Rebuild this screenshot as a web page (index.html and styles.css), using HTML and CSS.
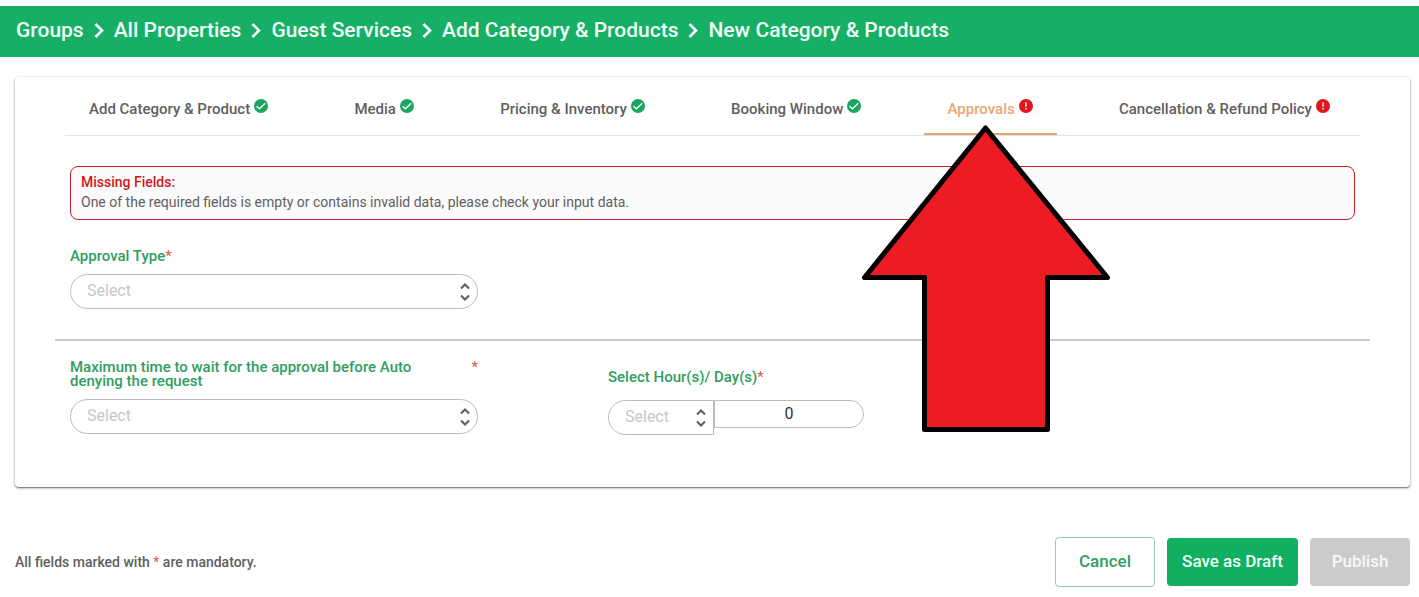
FILE: index.html
```
<!DOCTYPE html>
<html lang="en">
<head>
<meta charset="utf-8">
<meta name="viewport" content="width=device-width, initial-scale=1">
<title>New Category &amp; Products</title>
<link rel="stylesheet" href="styles.css">
</head>
<body>
<svg class="sprite" aria-hidden="true">
  <symbol id="ok" viewBox="0 0 14 14"><circle cx="7" cy="7" r="7" fill="#1aa563"/><path d="M2.600 7.200l2.800 2.600 5.800-5.600" fill="none" stroke="#fff" stroke-width="1.300"/></symbol>
  <symbol id="warn" viewBox="0 0 14 14"><circle cx="7" cy="7" r="7" fill="#e0161c"/><path d="M7 3.2v4.6M7 9v1.6" fill="none" stroke="#fff" stroke-width="1.4"/></symbol>
  <symbol id="next" viewBox="0 0 10 16"><path d="M1.500 2l6.500 6.500-6.500 6.500" fill="none" stroke="#fff" stroke-width="2.600"/></symbol>
  <symbol id="updown" viewBox="0 0 10 20"><path d="M1 6.5l4-4 4 4M1 13.5l4 4 4-4" fill="none" stroke="#5c5c5c" stroke-width="2"/></symbol>
</svg>

<nav class="breadcrumb" aria-label="Breadcrumb">
  <a href="#">Groups</a>
  <svg class="crumb-sep"><use href="#next"/></svg>
  <a href="#">All Properties</a>
  <svg class="crumb-sep"><use href="#next"/></svg>
  <a href="#">Guest Services</a>
  <svg class="crumb-sep"><use href="#next"/></svg>
  <a href="#">Add Category &amp; Products</a>
  <svg class="crumb-sep"><use href="#next"/></svg>
  <a href="#" aria-current="page">New Category &amp; Products</a>
</nav>

<main class="card">
  <ul class="tabs">
    <li class="tab"><button class="tab-button" type="button">Add Category &amp; Product<svg class="status"><use href="#ok"/></svg></button></li>
    <li class="tab"><button class="tab-button" type="button">Media<svg class="status"><use href="#ok"/></svg></button></li>
    <li class="tab"><button class="tab-button" type="button">Pricing &amp; Inventory<svg class="status"><use href="#ok"/></svg></button></li>
    <li class="tab"><button class="tab-button" type="button">Booking Window<svg class="status"><use href="#ok"/></svg></button></li>
    <li class="tab tab-active">
      <button class="tab-button" type="button">Approvals<svg class="status"><use href="#warn"/></svg></button>
      <svg class="pointer" viewBox="0 0 250 312" aria-hidden="true"><path d="M124.500 5L3.500 154.500H63.500V306.500H186.500V154.500H246.500Z" fill="#ed1c24" stroke="#000" stroke-width="5" stroke-linejoin="round"/></svg>
    </li>
    <li class="tab"><button class="tab-button" type="button">Cancellation &amp; Refund Policy<svg class="status"><use href="#warn"/></svg></button></li>
  </ul>

  <div class="alert" role="alert">
    <p class="alert-title">Missing Fields:</p>
    <p>One of the required fields is empty or contains invalid data, please check your input data.</p>
  </div>

  <form class="form" id="approvals">
    <div class="row row-first">
      <div class="field">
        <label class="label" for="type"><span>Approval Type<span class="required">*</span></span></label>
        <div class="select">
          <select class="control" id="type"><option>Select</option></select>
          <svg class="select-icon"><use href="#updown"/></svg>
        </div>
      </div>
    </div>
    <hr class="divider">
    <div class="row">
      <div class="field">
        <label class="label label-split" for="wait"><span class="label-text">Maximum time to wait for the approval before Auto denying the request</span><span class="required">*</span></label>
        <div class="select">
          <select class="control" id="wait"><option>Select</option></select>
          <svg class="select-icon"><use href="#updown"/></svg>
        </div>
      </div>
      <div class="field field-period">
        <label class="label" for="unit"><span>Select Hour(s)/ Day(s)<span class="required">*</span></span></label>
        <div class="period">
          <div class="select select-unit">
            <select class="control" id="unit"><option>Select</option></select>
            <svg class="select-icon"><use href="#updown"/></svg>
          </div>
          <input class="amount" type="text" inputmode="numeric" value="0" aria-label="Number of hours or days">
        </div>
      </div>
    </div>
  </form>
</main>

<footer class="footer">
  <p class="note">All fields marked with <span class="required">*</span> are mandatory.</p>
  <div class="actions">
    <button class="button button-outline" type="button">Cancel</button>
    <button class="button button-primary" type="button">Save as Draft</button>
    <button class="button button-disabled" type="button" disabled>Publish</button>
  </div>
</footer>
</body>
</html>
```
FILE: styles.css
```
* {
  box-sizing: border-box;
}

body {
  margin: 0;
  padding-top: 6px;
  background: #fff;
  color: #606060;
  font-family: Roboto, "Liberation Sans", sans-serif;
  font-size: 14px;
}

p, ul {
  margin: 0;
  padding: 0;
}

button, select, input {
  font-family: inherit;
}

.sprite {
  display: none;
}

.breadcrumb {
  display: flex;
  align-items: center;
  gap: 10px;
  min-height: 51px;
  padding: 0 16px 3px;
  background: #16af65;
  font-size: 21px;
  font-weight: 500;
}

.breadcrumb a {
  color: #f0fff6;
  text-decoration: none;
}

.crumb-sep {
  width: 10px;
  height: 16px;
}

.card {
  margin: 20px 9px 0 15px;
  padding: 0 40px 52px;
  border-radius: 4px;
  box-shadow: 0 1px 3px rgba(0, 0, 0, 0.4), 0 1px 1px rgba(0, 0, 0, 0.3);
}

.tabs {
  display: flex;
  justify-content: space-between;
  margin: 0 10px;
  padding-right: 6px;
  border-bottom: 1px solid #e4e4e4;
  list-style: none;
}

.tab {
  position: relative;
}

.tab-button {
  display: flex;
  align-items: center;
  gap: 4px;
  height: 58px;
  padding: 8px 24px 0;
  border: 0;
  border-bottom: 2px solid transparent;
  background: none;
  color: #606060;
  font-size: 15px;
  font-weight: 500;
}

.tab-active .tab-button {
  border-color: #dfa477;
  color: #eca577;
}

.status {
  width: 14px;
  height: 14px;
  margin-bottom: 6px;
}

.pointer {
  position: absolute;
  z-index: 1;
  top: 46px;
  left: 50%;
  width: 250px;
  height: 312px;
  margin-left: -129px;
  pointer-events: none;
}

.alert {
  margin: 30px 15px 0;
  padding: 5px 10px 7px;
  border: 1px solid #c4222b;
  border-radius: 8px;
  background: #fbfafb;
  line-height: 20px;
}

.alert-title {
  color: #d01820;
  font-weight: 500;
}

.row {
  display: grid;
  grid-template-columns: minmax(0, 408px) minmax(0, 256px);
  column-gap: 130px;
  padding: 0 15px;
}

.row-first {
  padding-top: 29px;
}

.label {
  display: block;
  margin-bottom: 11px;
  color: #2f9e60;
  font-size: 15px;
  font-weight: 500;
  line-height: 14px;
}

.label-split {
  display: flex;
  justify-content: space-between;
}

.label-text {
  max-width: 376px;
}

.required {
  color: #e2574c;
  font-weight: 400;
}

.select {
  position: relative;
}

.control {
  display: block;
  width: 100%;
  height: 35px;
  padding: 0 16px 2px;
  border: 1px solid #bdbdbd;
  border-radius: 18px;
  appearance: none;
  background: #fff;
  color: #c6c6c6;
  font-size: 16px;
}

.select-icon {
  position: absolute;
  top: 8px;
  right: 8px;
  width: 10px;
  height: 20px;
  pointer-events: none;
}

.divider {
  height: 2px;
  margin: 30px 0 19px;
  border: 0;
  background: #c9c9c9;
}

.field-period {
  padding-top: 10px;
}

.field-period .label {
  margin-bottom: 16px;
}

.period {
  display: flex;
  align-items: flex-start;
}

.select-unit {
  flex: 0 0 106px;
}

.select-unit .control {
  border-radius: 18px 0 0 18px;
}

.amount {
  flex: 1;
  min-width: 0;
  height: 28px;
  padding: 0 0 1px;
  border: 1px solid #bdbdbd;
  border-radius: 0 14px 14px 0;
  color: #333;
  font-size: 16px;
  text-align: center;
}

.footer {
  display: flex;
  align-items: center;
  justify-content: space-between;
  margin: 50px 9px 10px 15px;
}

.note {
  font-weight: 500;
}

.actions {
  display: flex;
  align-items: center;
  gap: 12px;
}

.button {
  min-width: 100px;
  height: 48px;
  padding: 0 15px 2px;
  border: 0;
  border-radius: 4px;
  font-size: 17px;
  font-weight: 500;
}

.button-outline {
  height: 50px;
  border: 1px solid #8dceb0;
  background: #fff;
  color: #2f9e60;
}

.button-primary {
  min-width: 131px;
  background: #10af62;
  color: #f0fff6;
}

.button-disabled {
  background: #cbcbcb;
  color: #f8f8f8;
}
```
